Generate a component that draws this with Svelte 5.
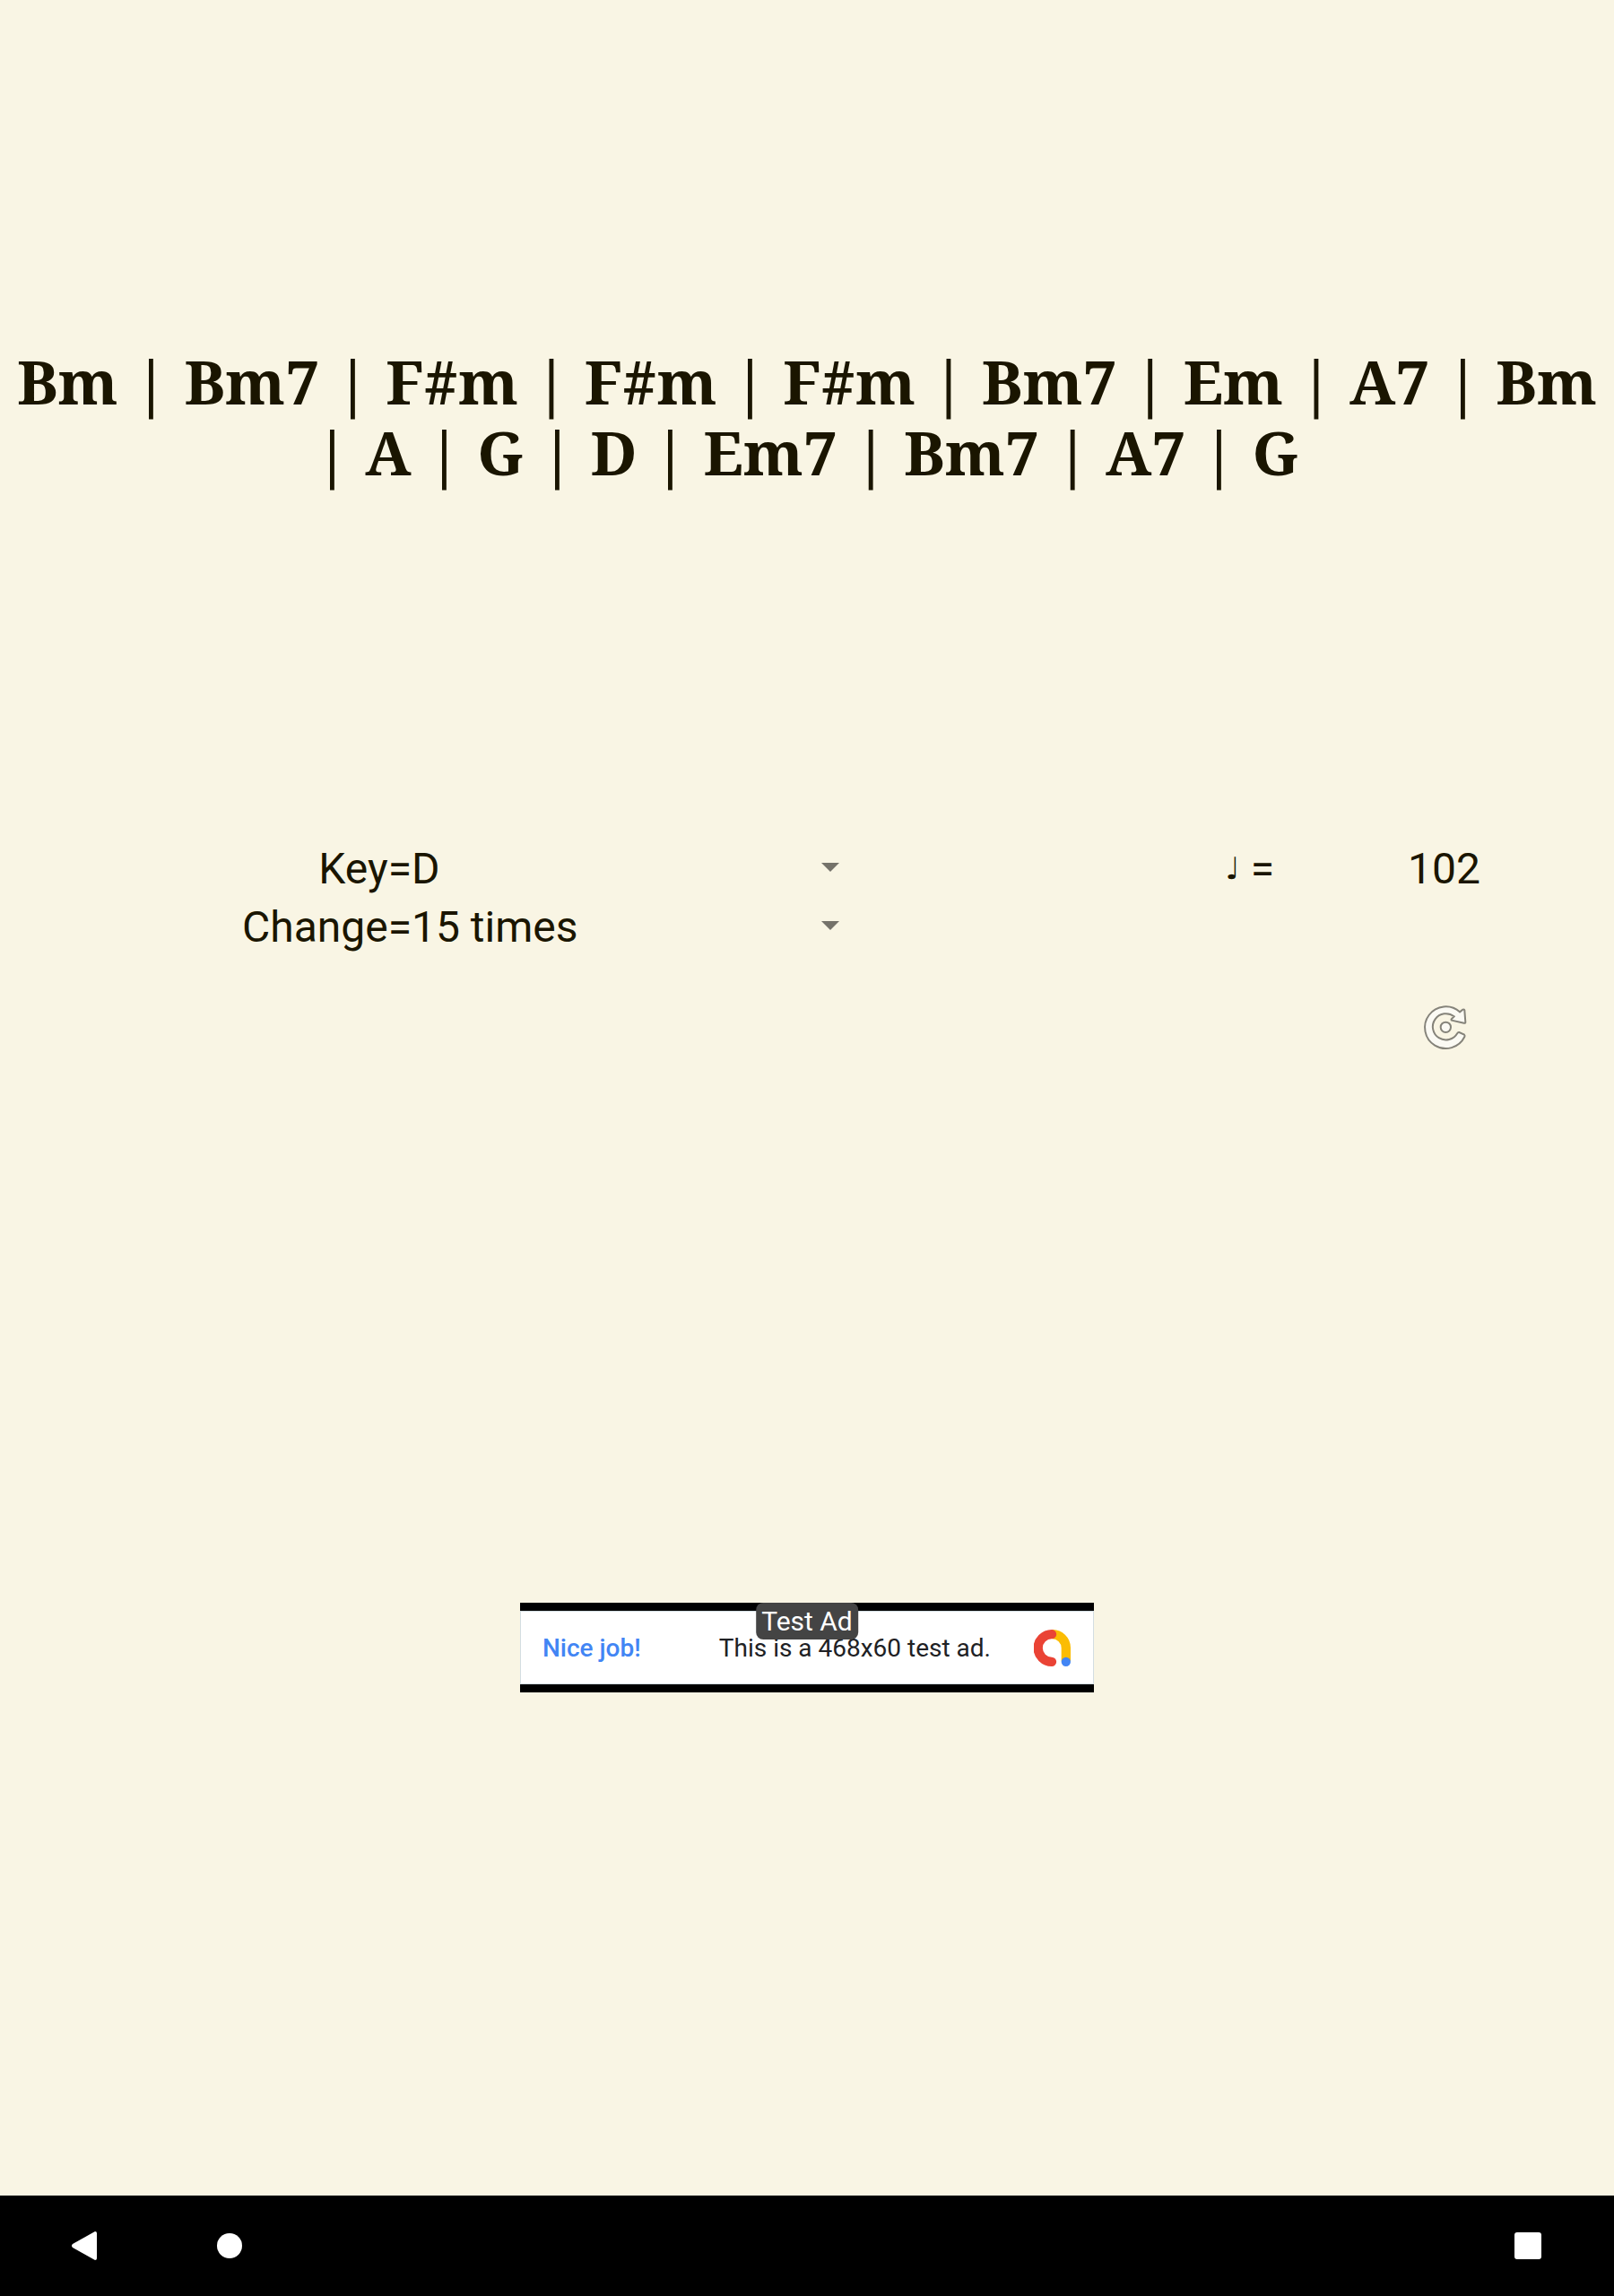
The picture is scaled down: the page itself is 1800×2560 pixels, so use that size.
<script>
  const lines = [
    'Bm | Bm7 | F#m | F#m | F#m | Bm7 | Em | A7 | Bm',
    '| A | G | D | Em7 | Bm7 | A7 | G'
  ];
  const keys = ['C', 'D', 'E', 'F', 'G', 'A', 'B'];
  const counts = [5, 10, 15, 20];
  let key = $state('D');
  let count = $state(15);
  let tempo = $state('102');
</script>

<div class="screen">
  <main>
    <h1>
      {#each lines as line}
        <span class="line">{line}</span>
      {/each}
    </h1>

    <form class="controls">
      <label for="key">Key=</label>
      <div class="picker">
        <select id="key" bind:value={key}>
          {#each keys as k}<option value={k}>{k}</option>{/each}
        </select>
        <svg class="caret" viewBox="0 0 20 14" aria-hidden="true"><path d="M0 0h20L10 10z" /></svg>
      </div>
      <label class="tempo" for="tempo"><span class="note">♩</span><span>=</span></label>
      <input id="tempo" type="text" inputmode="numeric" bind:value={tempo} />

      <label for="count">Change=</label>
      <div class="picker">
        <select id="count" bind:value={count}>
          {#each counts as c}<option value={c}>{c} times</option>{/each}
        </select>
        <svg class="caret" viewBox="0 0 20 14" aria-hidden="true"><path d="M0 0h20L10 10z" /></svg>
      </div>

      <button class="refresh" type="button" aria-label="Generate new chords">
        <svg viewBox="0 0 240 240" aria-hidden="true">
          <path d="M186 146 Q189 149 187 153 A70 70 0 1 1 171 70 L181 62 Q187 60 187 65 L190 104 Q190 109 185 107 L144 98 Q141 96 144 93 L152 85 A44 44 0 1 0 163 141 Q165 137 169 138 Z" />
          <circle cx="124" cy="121" r="17" />
        </svg>
      </button>
    </form>

    <a class="ad" href="#ad">
      <span class="creative">
        <span class="cheer">Nice job!</span>
        <span class="copy">This is a 468x60 test ad.</span>
        <svg class="logo" viewBox="0 0 123 123" aria-hidden="true">
          <path d="M60 15.500A46 46 0 0 1 107.500 62V106" stroke="#fbbc04" />
          <path d="M60 15.500A46 46 0 0 0 60 107.500" stroke="#ea4335" stroke-linecap="round" />
          <circle cx="107.500" cy="107.500" r="15.500" fill="#4285f4" />
        </svg>
      </span>
      <span class="badge">Test Ad</span>
    </a>
  </main>

  <nav aria-label="System">
    <button type="button" aria-label="Back">
      <svg viewBox="0 0 32 32"><path d="M28 0Q30 0 30 2V30Q30 32 28 32L3 18Q1 16 3 14Z" /></svg>
    </button>
    <button type="button" aria-label="Home">
      <svg viewBox="0 0 32 32"><circle cx="16" cy="16" r="14" /></svg>
    </button>
    <button class="last" type="button" aria-label="Recent apps">
      <svg viewBox="0 0 32 32"><rect x="1" y="1" width="30" height="30" rx="3" /></svg>
    </button>
  </nav>
</div>

<style>
  :global(body) {
    margin: 0;
    background: #f9f5e4;
  }
  .screen {
    display: flex;
    flex-direction: column;
    min-height: 100vh;
    background: #f9f5e4;
    color: #1a1500;
    font-family: Roboto, sans-serif;
  }
  main {
    flex: 1;
    display: flex;
    flex-direction: column;
  }
  h1 {
    margin: 0;
    padding-top: 385px;
    font: bold 68px/79px "Noto Serif", "DejaVu Serif Condensed", "DejaVu Serif", serif;
    text-align: center;
  }
  .line {
    display: block;
    white-space: nowrap;
  }
  .controls {
    display: grid;
    grid-template-columns: 459fr 505fr 457fr 379fr;
    grid-template-rows: 65px 65px auto;
    margin-top: 393px;
    font-size: 48px;
    line-height: 65px;
  }
  label {
    text-align: right;
    white-space: nowrap;
  }
  .tempo {
    display: flex;
    align-items: center;
    justify-content: flex-end;
    gap: 12px;
  }
  .note {
    font-family: "DejaVu Sans", sans-serif;
    font-size: 34px;
  }
  .picker {
    display: flex;
    align-items: center;
    padding-right: 28px;
  }
  select,
  input {
    appearance: none;
    min-width: 0;
    margin: 0;
    padding: 0;
    border: 0;
    background: transparent;
    color: inherit;
    font: inherit;
  }
  select {
    flex: 1;
    height: 65px;
  }
  input {
    text-align: center;
  }
  .caret {
    width: 20px;
    height: 14px;
    fill: #75726a;
  }
  .refresh {
    grid-column: 4;
    grid-row: 3;
    justify-self: center;
    display: flex;
    margin-top: 39px;
    padding: 0;
    border: 0;
    background: none;
  }
  .refresh svg {
    width: 80px;
    height: 80px;
    fill: #fbfaf4;
    stroke: #85837a;
    stroke-width: 6;
  }
  .ad {
    position: relative;
    align-self: center;
    width: 640px;
    max-width: 100%;
    box-sizing: border-box;
    margin-top: 602px;
    padding: 9px 0;
    background: #000;
    color: #202124;
    text-decoration: none;
  }
  .creative {
    display: flex;
    align-items: center;
    height: 82px;
    box-sizing: border-box;
    padding: 0 25px 0 24px;
    border: 1px solid #d3dde2;
    background: #fff;
    font-size: 28px;
    white-space: nowrap;
  }
  .cheer {
    color: #4285f4;
    font-weight: 500;
  }
  .copy {
    margin-left: auto;
  }
  .logo {
    width: 41px;
    height: 41px;
    margin-left: 48px;
    fill: none;
    stroke-width: 31;
  }
  .badge {
    position: absolute;
    top: 0;
    left: 50%;
    transform: translateX(-50%);
    padding: 0 6px;
    border-radius: 8px;
    background: #444;
    color: #fff;
    font-size: 30px;
    line-height: 41px;
    white-space: nowrap;
  }
  nav {
    display: flex;
    align-items: center;
    gap: 130px;
    height: 112px;
    padding: 0 80px 0 78px;
    background: #000;
  }
  nav button {
    display: flex;
    padding: 0;
    border: 0;
    background: none;
  }
  nav svg {
    width: 32px;
    height: 32px;
    fill: #fff;
  }
  .last {
    margin-left: auto;
  }
</style>
